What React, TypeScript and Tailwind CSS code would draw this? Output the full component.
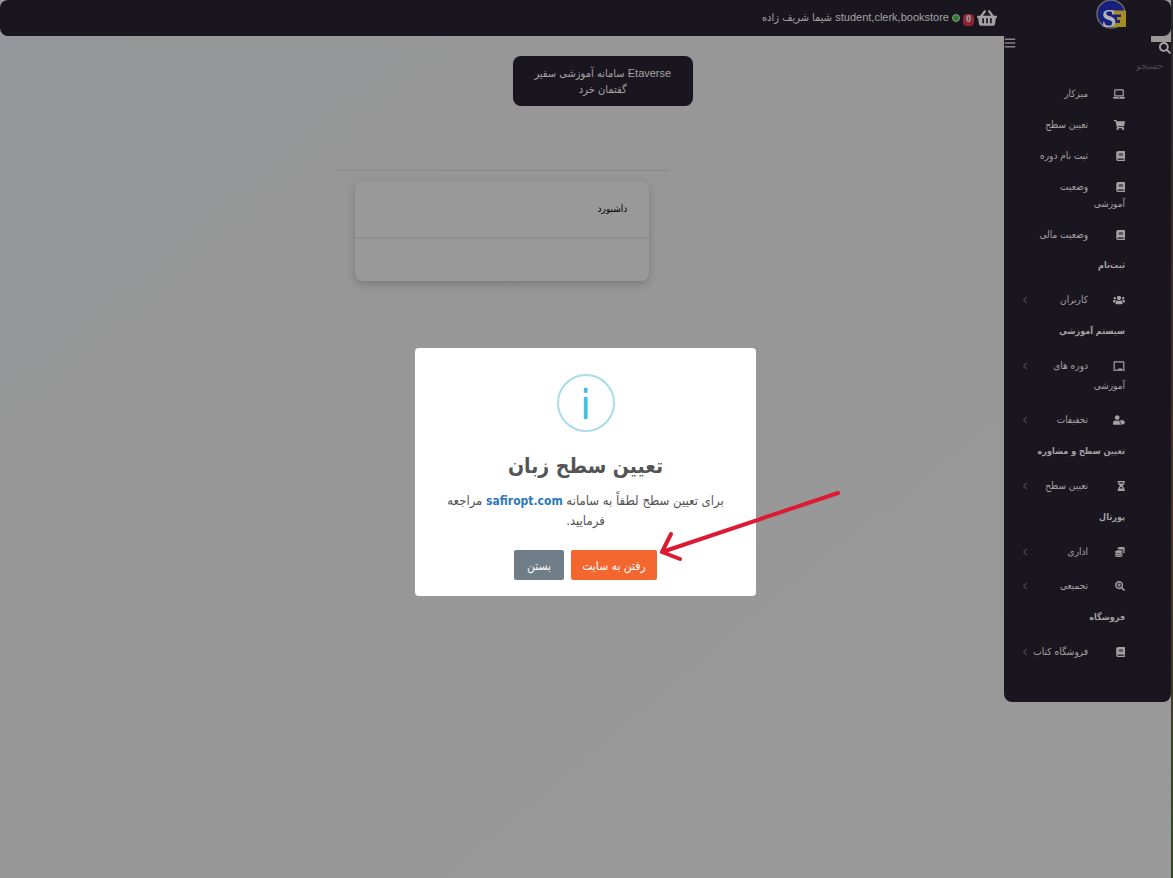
import {
  FaBars,
  FaBook,
  FaChalkboard,
  FaChevronLeft,
  FaCoins,
  FaHourglassHalf,
  FaLaptop,
  FaSearch,
  FaSearchPlus,
  FaShoppingBasket,
  FaShoppingCart,
  FaUsers,
  FaUserTag,
} from 'react-icons/fa';
import type { IconType } from 'react-icons';

interface MenuItem {
  label: string;
  icon: IconType;
}

interface MenuGroup {
  title: string;
  items: MenuItem[];
}

const MAIN_LINKS: MenuItem[] = [
  { label: 'میزکار',        icon: FaLaptop },
  { label: 'تعیین سطح',     icon: FaShoppingCart },
  { label: 'ثبت نام دوره',  icon: FaBook },
  { label: 'وضعیت آموزشی',  icon: FaBook },
  { label: 'وضعیت مالی',    icon: FaBook },
];

const GROUPS: MenuGroup[] = [
  { title: 'ثبت‌نام', items: [{ label: 'کاربران', icon: FaUsers }] },
  {
    title: 'سیستم آموزشی',
    items: [
      { label: 'دوره های آموزشی', icon: FaChalkboard },
      { label: 'تخفیفات', icon: FaUserTag },
    ],
  },
  { title: 'تعیین سطح و مشاوره', items: [{ label: 'تعیین سطح', icon: FaHourglassHalf }] },
  {
    title: 'پورتال',
    items: [
      { label: 'اداری', icon: FaCoins },
      { label: 'تجمیعی', icon: FaSearchPlus },
    ],
  },
  { title: 'فروشگاه', items: [{ label: 'فروشگاه کتاب', icon: FaBook }] },
];

function Logo() {
  return (
    <svg viewBox="0 0 32 32" className="h-8 w-8 overflow-visible" aria-hidden="true">
      <circle cx="16" cy="14" r="14" fill="#17207c" stroke="#6f6c6c" strokeWidth="1.4" />
      <path d="M17 10.500h14v16.500H17v-4h8v-3h-3v-3h4v-2.500h-9z" fill="#a38d25" />
      <text
        x="14"
        y="27"
        textAnchor="middle"
        direction="ltr"
        fill="#b4b4bf"
        className="font-['Liberation_Serif',serif] text-[26px] font-bold"
      >
        S
      </text>
    </svg>
  );
}

function TopBar() {
  return (
    <header className="flex h-9 items-center rounded-lg bg-[#1a1620] text-[#a3a3a3]">
      <div className="w-[174px] shrink-0 self-start pr-11">
        <Logo />
      </div>
      <div className="flex items-center gap-[3px]">
        <FaShoppingBasket className="h-5 w-5" />
        <span className="mt-1 rounded-sm bg-[#8f2433] px-[3px] text-[8px] leading-3 font-bold">0</span>
        <span className="h-2 w-2 rounded-full border border-[#8a9a8a] bg-[#2e7d32]" />
        <span className="text-[11px]">
          <bdi className="font-['Liberation_Sans',sans-serif]">student,clerk,bookstore</bdi> شیما شریف زاده
        </span>
      </div>
    </header>
  );
}

function LinkContent({ item }: { item: MenuItem }) {
  const Icon = item.icon;
  return (
    <>
      <Icon preserveAspectRatio="xMaxYMid meet" className="ml-[25px] inline-block h-2.5 w-3 align-middle" />
      {item.label}
    </>
  );
}

function Sidebar() {
  return (
    <aside className="w-[167px] shrink-0 rounded-b-lg bg-[#1a1620] pb-[33px] text-[10px] text-[#a3a3a3]">
      <div className="flex h-[42px] items-start justify-between">
        <div>
          <div className="h-1.5 w-5 bg-[#999]" />
          <label htmlFor="menu-search" aria-label="جستجو">
            <FaSearch className="h-3 w-3" />
          </label>
          <input
            id="menu-search"
            type="search"
            placeholder="جستجو"
            className="block h-6 w-24 bg-transparent pr-2 leading-6 outline-none placeholder:text-[#4b4652]"
          />
        </div>
        <button type="button" aria-label="منو" className="pt-px">
          <FaBars className="h-3 w-3 text-[#85838a]" />
        </button>
      </div>

      <nav className="pr-[46px] pl-[18px]">
        <ul className="pb-px">
          {MAIN_LINKS.map((item) => (
            <li key={item.label} className="py-[7px] leading-[17px]">
              <a href="#" className="block w-24">
                <LinkContent item={item} />
              </a>
            </li>
          ))}
        </ul>

        {GROUPS.map((group) => (
          <section key={group.title}>
            <h3 className="pt-1.5 pb-[9px] text-[9px] leading-[17px] font-bold">{group.title}</h3>
            <ul>
              {group.items.map((item) => (
                <li key={item.label}>
                  <a href="#" className="flex justify-between py-[7px] leading-5">
                    <span className="w-24">
                      <LinkContent item={item} />
                    </span>
                    <FaChevronLeft className="mt-1.5 h-2 w-1.5 shrink-0 text-[#4b4652]" />
                  </a>
                </li>
              ))}
            </ul>
          </section>
        ))}
      </nav>
    </aside>
  );
}

function Dashboard() {
  return (
    <main className="flex-1 bg-linear-to-br from-[#949699] via-[#979797] via-30% to-[#989898] pt-5">
      <h1 className="mr-[31%] h-[50px] w-[180px] rounded-lg bg-[#1a1620] px-4 py-[9px] text-center text-[11px] leading-4 text-[#a3a3a3]">
        <bdi className="font-['Liberation_Sans',sans-serif]">Etaverse</bdi> سامانه آموزشی سفیر گفتمان خرد
      </h1>
      <div className="mx-auto mt-16 w-1/3 border-t border-[#87888a] px-5 pt-2.5">
        <section className="rounded-lg bg-[#999] shadow-[0_3px_8px_rgba(0,0,0,0.2)]">
          <h2 className="border-b-2 border-[#8f8f8f] px-[22px] py-5 text-[10px] leading-4 text-black">داشبورد</h2>
          <div className="h-[42px]" />
        </section>
      </div>
    </main>
  );
}

function LevelDialog() {
  return (
    <div className="absolute inset-x-0 top-[348px] flex justify-center">
      <div
        role="dialog"
        aria-labelledby="dialog-title"
        className="relative w-[341px] rounded-sm bg-white px-6 pt-[26px] pb-4 text-center text-[#545454]"
      >
        <div className="mx-auto flex h-[58px] w-[58px] items-center justify-center rounded-full border-2 border-[#a9dcea] pt-1 font-['DejaVu_Sans',sans-serif] text-[40px] leading-none text-[#45bbdf]">
          i
        </div>
        <h2 id="dialog-title" className="mt-5 text-[21px] leading-7 font-bold">
          تعیین سطح زبان
        </h2>
        <p className="mt-[11px] text-[13px] leading-5">
          <span>برای تعیین سطح لطفاً به سامانه</span>{' '}
          <a href="#" className="text-[12px] font-bold text-[#2b79bd]">
            safiropt.com
          </a>{' '}
          <span>مراجعه</span> <span>فرمایید.</span>
        </p>
        <div className="mt-[19px] flex justify-center gap-[7px] text-[12px] text-white">
          <button type="button" className="h-[30px] w-[86px] rounded-xs bg-[#f3672f] pt-0.5">
            رفتن به سایت
          </button>
          <button type="button" className="h-[30px] w-[50px] rounded-xs bg-[#6e7d88] pt-0.5">
            بستن
          </button>
        </div>

        {/* Arrow pointing at the confirm button */}
        <svg viewBox="0 0 190 80" className="pointer-events-none absolute top-[137px] left-60 h-20 w-[190px]" aria-hidden="true">
          <path
            d="M183 8 7 67M16 49 7 67l18 7"
            fill="none"
            stroke="#dc1b33"
            strokeWidth="4"
            strokeLinecap="round"
            strokeLinejoin="round"
          />
        </svg>
      </div>
    </div>
  );
}

export default function App() {
  return (
    <div
      dir="rtl"
      className="flex min-h-screen bg-[#999] font-['DejaVu_Sans_Condensed','DejaVu_Sans',sans-serif]"
    >
      {/* Page edge */}
      <div className="w-0.5 shrink-0 bg-linear-to-b from-[#2a2a2c] via-[#4a3326] via-60% to-[#2c4a22]" />
      <div className="relative flex flex-1 flex-col">
        <TopBar />
        <div className="flex flex-1 items-stretch">
          <div className="shrink-0">
            <Sidebar />
          </div>
          <Dashboard />
        </div>
        <LevelDialog />
      </div>
    </div>
  );
}
